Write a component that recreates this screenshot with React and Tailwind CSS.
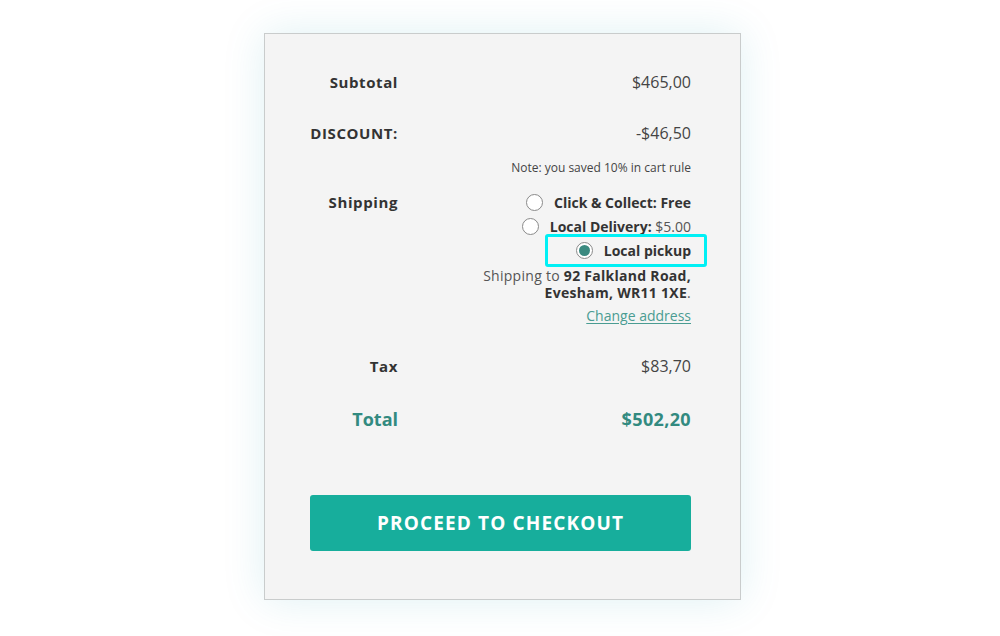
import React from 'react'

const font = { fontFamily: '"Open Sans", "Liberation Sans", sans-serif' }

const Radio = ({ checked }) => (
  <span className="flex h-[17px] w-[17px] shrink-0 items-center justify-center rounded-full border border-[#8a8a8a] bg-white">
    {checked && <span className="h-[11px] w-[11px] rounded-full bg-[#3b8a80]" />}
  </span>
)

const Row = ({ label, children, className = '' }) => (
  <div className={`flex items-start ${className}`}>
    <div className="w-[88px] shrink-0 whitespace-nowrap text-right text-[15px] font-bold leading-[24px] tracking-[0.04em] text-[#333]">{label}</div>
    <div className="flex-1 text-right">{children}</div>
  </div>
)

export default function App() {
  const options = [
    { label: 'Click & Collect:', price: 'Free', bold: true },
    { label: 'Local Delivery:', price: '$5.00', bold: false },
  ]

  return (
    <div className="min-h-screen bg-white pt-[33px]" style={font}>
      <div className="ml-[264px] w-[477px] border border-[#c9cccc] bg-[#f4f4f4] pb-[48px] pl-[45px] pr-[49px] pt-[36px] shadow-[0_0_40px_rgba(0,150,170,0.13)]">
        <Row label="Subtotal">
          <span className="text-[16px] leading-[24px] text-[#444]">$465,00</span>
        </Row>

        <Row label="DISCOUNT:" className="mt-[27px]">
          <span className="text-[16px] leading-[24px] text-[#444]">-$46,50</span>
        </Row>
        <div className="mt-[14px] text-right text-[12px] leading-[18px] text-[#444]">
          Note: you saved 10% in cart rule
        </div>

        <Row label="Shipping" className="mt-[13px]">
          <div className="flex flex-col items-end">
            {options.map((o) => (
              <div key={o.label} className="flex h-[24px] items-center gap-[11px]">
                <Radio />
                <span className="text-[14px] font-bold text-[#333]">
                  {o.label}{' '}
                  <span className={o.bold ? '' : 'font-normal text-[#555]'}>{o.price}</span>
                </span>
              </div>
            ))}
            <div className="relative flex h-[24px] items-center gap-[11px]">
              <Radio checked />
              <span className="text-[14px] font-bold text-[#333]">Local pickup</span>
              <div className="absolute left-[-31px] right-[-16px] top-[-4px] bottom-[-5px] rounded-[3px] border-[3px] border-[#00f0f5]" />
            </div>
            <div className="mt-[5px] text-[14px] leading-[17px] tracking-[0.02em] text-[#555]">
              Shipping to <span className="font-bold text-[#333]">92 Falkland Road,</span>
              <br />
              <span className="font-bold text-[#333]">Evesham, WR11 1XE</span>.
            </div>
            <a href="#" className="mt-[6px] text-[14px] leading-[17px] text-[#4a9c92] underline underline-offset-2">
              Change address
            </a>
          </div>
        </Row>

        <Row label="Tax" className="mt-[30px]">
          <span className="text-[16px] leading-[24px] text-[#444]">$83,70</span>
        </Row>

        <div className="mt-[29px] flex items-start">
          <div className="w-[88px] shrink-0 text-right text-[18px] font-bold leading-[24px] text-[#328a80]">Total</div>
          <div className="flex-1 text-right text-[18px] font-bold leading-[24px] tracking-[0.02em] text-[#328a80]">$502,20</div>
        </div>

        <button className="mt-[64px] flex h-[56px] w-full items-center justify-center rounded-[3px] bg-[#17ae9c] text-[19px] font-bold tracking-[0.06em] text-white">
          PROCEED TO CHECKOUT
        </button>
      </div>
    </div>
  )
}
